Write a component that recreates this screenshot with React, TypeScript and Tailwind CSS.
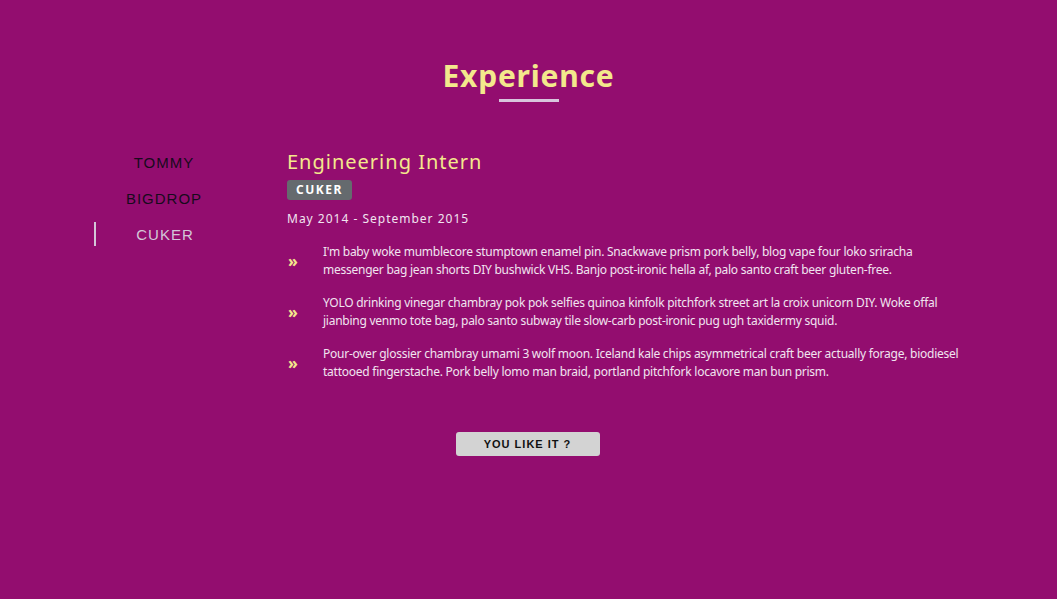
import React from "react";

const bullets: string[][] = [
  [
    "I'm baby woke mumblecore stumptown enamel pin. Snackwave prism pork belly, blog vape four loko sriracha",
    "messenger bag jean shorts DIY bushwick VHS. Banjo post-ironic hella af, palo santo craft beer gluten-free.",
  ],
  [
    "YOLO drinking vinegar chambray pok pok selfies quinoa kinfolk pitchfork street art la croix unicorn DIY. Woke offal",
    "jianbing venmo tote bag, palo santo subway tile slow-carb post-ironic pug ugh taxidermy squid.",
  ],
  [
    "Pour-over glossier chambray umami 3 wolf moon. Iceland kale chips asymmetrical craft beer actually forage, biodiesel",
    "tattooed fingerstache. Pork belly lomo man braid, portland pitchfork locavore man bun prism.",
  ],
];

export default function App() {
  return (
    <div className="w-full h-[599px] bg-[#930d6f] overflow-hidden" style={{ fontFamily: '"Noto Sans", sans-serif' }}>
      <div className="flex flex-col items-center pt-[56px]">
        <h2 className="text-[30px] leading-[40px] font-bold tracking-[0.8px] text-[#f3e88c]">Experience</h2>
        <div className="w-[60px] h-[3px] bg-[#d8c5dd] mt-[3px]" />
      </div>
      <div className="flex pl-[94px] pt-[46px]">
        <div className="w-[140px] flex flex-col -mt-[3px]" style={{ fontFamily: '"Liberation Sans", Arial, sans-serif' }}>
          <div className="h-[36px] flex items-center justify-center text-[15px] tracking-[1px] text-[#170a1c]">TOMMY</div>
          <div className="h-[36px] flex items-center justify-center text-[15px] tracking-[1px] text-[#170a1c]">BIGDROP</div>
          <div className="h-[24px] mt-[5px] flex items-center justify-center text-[15px] tracking-[1px] text-[#d3c6d8] border-l-2 border-[#d3c6d8]">
            <span className="mt-[2px]">CUKER</span>
          </div>
        </div>
        <div className="ml-[53px] w-[700px]">
          <h3 className="text-[20px] leading-[28px] tracking-[1px] text-[#f3e88c]">Engineering Intern</h3>
          <div className="mt-[3px] inline-flex items-center h-[20px] px-[9px] rounded-[3px] bg-[#656a6e] text-white text-[12px] font-bold tracking-[1.5px]">CUKER</div>
          <div className="mt-[10px] text-[12px] tracking-[1px] text-[#f1e4f0]">May 2014 - September 2015</div>
          <ul className="mt-[15px] flex flex-col gap-[15px]">
            {bullets.map((b, i) => (
              <li key={i} className="flex items-center">
                <span className="w-[36px] shrink-0 text-[#f3e88c] text-[16px] font-bold pl-[1px]">»</span>
                <span className="text-[12px] leading-[18px] text-[#f1e4f0] whitespace-nowrap tracking-[-0.25px]">
                  {b[0]}
                  <br />
                  {b[1]}
                </span>
              </li>
            ))}
          </ul>
        </div>
      </div>
      <div className="flex justify-center pt-[51px] pr-[2px]">
        <button className="w-[144px] h-[24px] rounded-[3px] bg-[#d3d3d3] text-[11px] font-bold tracking-[1px] text-[#111]" style={{ fontFamily: '"Liberation Sans", Arial, sans-serif' }}>YOU LIKE IT ?</button>
      </div>
    </div>
  );
}
